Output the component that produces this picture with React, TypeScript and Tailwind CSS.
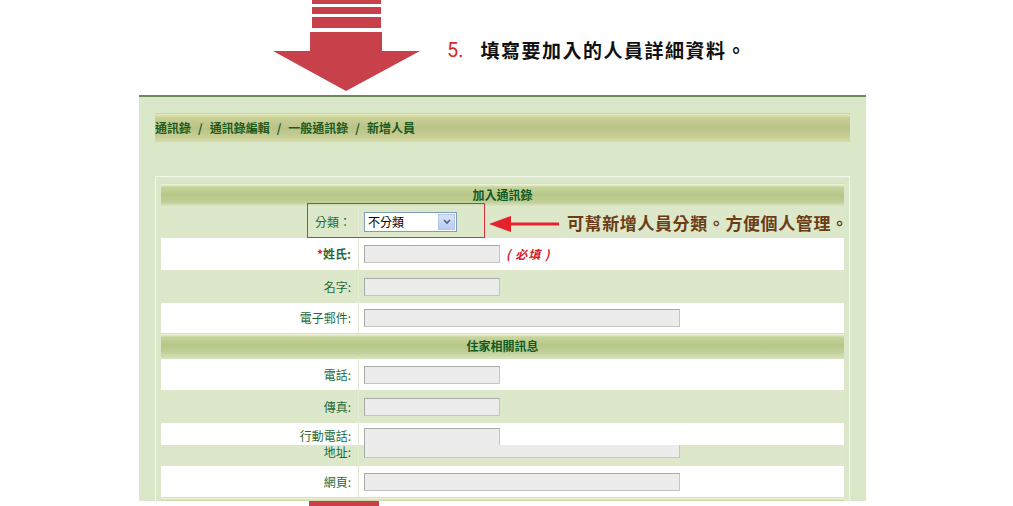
import React from "react";

const FONT = "font-['Noto_Sans_CJK_TC','Noto_Sans_CJK_SC',sans-serif]";

function Input({ wide }: { wide?: boolean }) {
  return (
    <div
      className={`${wide ? "w-[316px]" : "w-[136px]"} h-[18px] bg-[#ececec] border border-[#a9a9a9] border-b-[#c4c4c4] border-r-[#c4c4c4]`}
    />
  );
}

function Row({
  label,
  green,
  cls,
  children,
  bold,
  required,
}: {
  label: string;
  green?: boolean;
  cls: string;
  children?: React.ReactNode;
  bold?: boolean;
  required?: boolean;
}) {
  return (
    <div className={`flex ${green ? "bg-[#dce8c9]" : "bg-white"} ${cls}`}>
      <div
        className={`w-[198px] shrink-0 flex items-center justify-end pr-[7px] border-r ${
          green ? "border-[#e4eed6]" : "border-[#dfe8d2]"
        } text-[12px] leading-[16px] text-[#1f6a3a] ${bold ? "font-bold text-[#0d5a26]" : ""}`}
      >
        {required && <span className="text-[#d3202a] font-bold">*</span>}
        {label}
      </div>
      <div className="flex-1 flex items-center pl-[5px]">{children}</div>
    </div>
  );
}

function Header({ title, cls }: { title: string; cls: string }) {
  return (
    <div
      className={`${cls} flex items-center justify-center text-[12px] font-bold text-[#0f5a23] bg-[linear-gradient(to_bottom,#c2d0a0_0px,#eef3da_1px,#e6edcd_2px,#c6d49c_4px,#b6c788_12px,#bfcf96_19px,#d9e4c2_100%)]`}
    >
      {title}
    </div>
  );
}

function Sep() {
  return <span className="mx-[7px]">/</span>;
}

export default function App() {
  return (
    <div className={`w-[1013px] h-[506px] bg-white overflow-hidden ${FONT}`}>
      {/* top area */}
      <div className="h-[95px] flex items-start">
        <svg
          className="ml-[273px] shrink-0"
          width="147"
          height="92"
          viewBox="0 0 147 92"
        >
          <rect x="39" y="0" width="69" height="4" fill="#c8414a" />
          <rect x="39" y="7" width="69" height="7" fill="#c8414a" />
          <rect x="39" y="17" width="69" height="11" fill="#c8414a" />
          <path d="M37 32 H109 V51 H147 L73 91 L0 51 H37 Z" fill="#c8414a" />
        </svg>
        <div className="ml-[27px] mt-[37px] flex items-center h-[26px]">
          <span className="font-['Roboto',sans-serif] text-[20px] text-[#d9262b] leading-[26px]">
            5.
          </span>
          <span className="ml-[17px] text-[19px] font-bold text-[#111] leading-[26px] tracking-[1.5px]">
            填寫要加入的人員詳細資料。
          </span>
        </div>
      </div>

      {/* panel */}
      <div className="relative ml-[139px] w-[727px] h-[406px] overflow-hidden border-t-2 border-[#6b8a5c] bg-[#dbe7c9] pt-[16px] pl-[16px]">
        <div className="w-[695px] h-[29px] flex items-center text-[12px] font-bold text-[#1c5a1c] bg-[linear-gradient(to_bottom,#b8c28a_0px,#e4e9bb_1px,#dde3b0_2px,#c8cf95_5px,#bac386_15px,#c6cd93_23px,#d6dcaa_100%)]">
          通訊錄<Sep />通訊錄編輯<Sep />一般通訊錄<Sep />新增人員
        </div>

        <div className="mt-[34px] w-[695px] border border-[#f4f8ec] pt-[6px] px-[5px]">
          <Header title="加入通訊錄" cls="h-[23px]" />
          <Row label="分類：" green cls="h-[32px]">
            <div className="w-[93px] h-[20px] border border-[#7f9db9] bg-white flex items-center">
              <span className="ml-[3px] flex-1 text-[12px] leading-[16px] text-black">
                不分類
              </span>
              <div className="w-[17px] h-[16px] mr-[1px] bg-[linear-gradient(to_bottom,#d6e2f7,#b9cdf0)] border border-[#b3c6ea] flex items-center justify-center">
                <svg width="8" height="6" viewBox="0 0 8 6">
                  <path d="M1 1 L4 4 L7 1" stroke="#4d6185" strokeWidth="1.6" fill="none" />
                </svg>
              </div>
            </div>
          </Row>
          <Row label="姓氏:" bold required cls="h-[32px]">
            <Input />
            <span className="ml-[6px] text-[12px] font-bold italic text-[#d3202a] tracking-[1px]">
              ( 必填 )
            </span>
          </Row>
          <Row label="名字:" green cls="h-[33px]">
            <Input />
          </Row>
          <Row label="電子郵件:" cls="h-[30px]">
            <Input wide />
          </Row>
          <Header title="住家相關訊息" cls="h-[26px]" />
          <Row label="電話:" cls="h-[31px]">
            <Input />
          </Row>
          <Row label="傳真:" green cls="h-[33px]">
            <Input />
          </Row>
          {/* overlapping rows */}
          <div className="flex bg-white h-[22px] overflow-hidden">
            <div className="w-[198px] shrink-0 flex items-start justify-end pt-[5px] pr-[7px] border-r border-[#dfe8d2] text-[12px] leading-[16px] text-[#1f6a3a]">
              行動電話:
            </div>
            <div className="flex-1 flex items-start pl-[5px] pt-[5px]">
              <Input />
            </div>
          </div>
          <div className="flex bg-[#dce8c9] h-[21px]">
            <div className="w-[198px] shrink-0 flex items-start justify-end pt-[1px] pr-[7px] border-r border-[#e4eed6] text-[12px] leading-[12px] text-[#1f6a3a]">
              地址:
            </div>
            <div className="flex-1 flex items-start pl-[5px]">
              <div className="w-[316px] h-[13px] bg-[#ececec] border border-t-0 border-[#a9a9a9] border-b-[#c4c4c4] border-r-[#c4c4c4]" />
            </div>
          </div>
          <Row label="網頁:" cls="h-[31px]">
            <Input wide />
          </Row>
          <Header title="" cls="h-[23px]" />
        </div>

        {/* annotation overlay */}
        <div className="absolute left-[168px] top-[106px] w-[178px] h-[35px] border-[1.5px] border-[#d8333a]" />
        <svg
          className="absolute left-[350px] top-[118px]"
          width="72"
          height="18"
          viewBox="0 0 72 18"
        >
          <path d="M0 9 L22 1 L22 7.5 L70 7.5 L70 10.5 L22 10.5 L22 17 Z" fill="#e3232b" />
        </svg>
        <div className="absolute left-[428px] top-[114px] text-[17px] leading-[24px] font-bold text-[#6a3d17] tracking-[0.6px] whitespace-nowrap">
          可幫新增人員分類。方便個人管理。
        </div>
      </div>
      <div className="ml-[309px] w-[70px] h-[5px] bg-[#c8414a]" />
    </div>
  );
}
